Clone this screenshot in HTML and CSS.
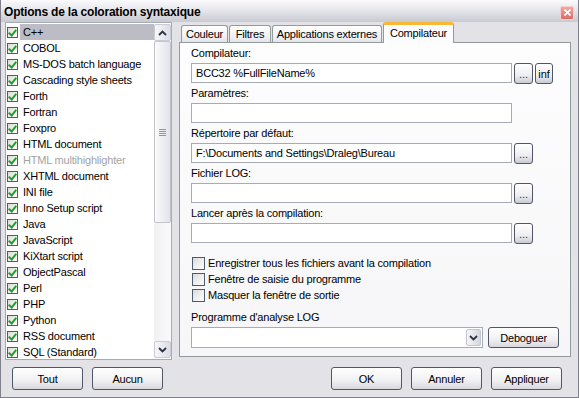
FILE: index.html
```html
<!DOCTYPE html>
<html lang="fr">
<head>
    <meta charset="UTF-8">
    <title>Options de la coloration syntaxique</title>
    <link rel="stylesheet" href="styles.css">
</head>
<body>
    <div class="window">
        <div class="titlebar">
            <span class="title">Options de la coloration syntaxique</span>
            <span class="close-btn">
                <svg width="7" height="7" viewBox="0 0 7 7"><path d="M0.5 0.5L6.5 6.5M6.5 0.5L0.5 6.5" stroke="#fff" stroke-width="1.6"/></svg>
            </span>
        </div>

        <div class="content">
            <!-- Liste des langages -->
            <div class="left-col">
                <div class="listbox">
                    <ul class="lang-list">
                        <li class="selected"><span class="check"></span><span class="lbl">C++</span></li>
                        <li><span class="check"></span><span class="lbl">COBOL</span></li>
                        <li><span class="check"></span><span class="lbl">MS-DOS batch language</span></li>
                        <li><span class="check"></span><span class="lbl">Cascading style sheets</span></li>
                        <li><span class="check"></span><span class="lbl">Forth</span></li>
                        <li><span class="check"></span><span class="lbl">Fortran</span></li>
                        <li><span class="check"></span><span class="lbl">Foxpro</span></li>
                        <li><span class="check"></span><span class="lbl">HTML document</span></li>
                        <li class="disabled"><span class="check"></span><span class="lbl">HTML multihighlighter</span></li>
                        <li><span class="check"></span><span class="lbl">XHTML document</span></li>
                        <li><span class="check"></span><span class="lbl">INI file</span></li>
                        <li><span class="check"></span><span class="lbl">Inno Setup script</span></li>
                        <li><span class="check"></span><span class="lbl">Java</span></li>
                        <li><span class="check"></span><span class="lbl">JavaScript</span></li>
                        <li><span class="check"></span><span class="lbl">KiXtart script</span></li>
                        <li><span class="check"></span><span class="lbl">ObjectPascal</span></li>
                        <li><span class="check"></span><span class="lbl">Perl</span></li>
                        <li><span class="check"></span><span class="lbl">PHP</span></li>
                        <li><span class="check"></span><span class="lbl">Python</span></li>
                        <li><span class="check"></span><span class="lbl">RSS document</span></li>
                        <li><span class="check"></span><span class="lbl">SQL (Standard)</span></li>
                    </ul>
                    <div class="vscroll">
                        <div class="sb-btn">
                            <svg width="9" height="6" viewBox="0 0 9 6"><path d="M1 5L4.5 1.5L8 5" fill="none" stroke="#2b3242" stroke-width="1.8"/></svg>
                        </div>
                        <div class="sb-track">
                            <div class="sb-thumb"><span class="grip"></span></div>
                        </div>
                        <div class="sb-btn">
                            <svg width="9" height="6" viewBox="0 0 9 6"><path d="M1 1L4.5 4.5L8 1" fill="none" stroke="#2b3242" stroke-width="1.8"/></svg>
                        </div>
                    </div>
                </div>
                <div class="btn-row">
                    <button class="btn">Tout</button>
                    <button class="btn">Aucun</button>
                </div>
            </div>

            <!-- Onglets -->
            <div class="right-col">
                <div class="tabs">
                    <div class="tab tab-couleur">Couleur</div>
                    <div class="tab tab-filtres">Filtres</div>
                    <div class="tab tab-apps">Applications externes</div>
                    <div class="tab tab-compil active">Compilateur</div>
                </div>
                <div class="tab-panel">
                    <div class="field-label">Compilateur:</div>
                    <div class="field-row">
                        <div class="input">BCC32 %FullFileName%</div>
                        <button class="small-btn">...</button>
                        <button class="small-btn inf-btn">inf</button>
                    </div>
                    <div class="field-label">Paramètres:</div>
                    <div class="field-row">
                        <div class="input"></div>
                    </div>
                    <div class="field-label">Répertoire par défaut:</div>
                    <div class="field-row">
                        <div class="input">F:\Documents and Settings\Draleg\Bureau</div>
                        <button class="small-btn">...</button>
                    </div>
                    <div class="field-label">Fichier LOG:</div>
                    <div class="field-row">
                        <div class="input"></div>
                        <button class="small-btn">...</button>
                    </div>
                    <div class="field-label">Lancer après la compilation:</div>
                    <div class="field-row">
                        <div class="input"></div>
                        <button class="small-btn">...</button>
                    </div>

                    <div class="options">
                        <label class="opt"><span class="box"></span>Enregistrer tous les fichiers avant la compilation</label>
                        <label class="opt"><span class="box"></span>Fenêtre de saisie du programme</label>
                        <label class="opt"><span class="box"></span>Masquer la fenêtre de sortie</label>
                    </div>

                    <div class="field-label log-label">Programme d'analyse LOG</div>
                    <div class="combo-row">
                        <div class="combo">
                            <span class="combo-arrow">
                                <svg width="9" height="6" viewBox="0 0 9 6"><path d="M1 1L4.5 4.5L8 1" fill="none" stroke="#2b3242" stroke-width="1.8"/></svg>
                            </span>
                        </div>
                        <button class="btn debug-btn">Deboguer</button>
                    </div>
                </div>
                <div class="btn-row right">
                    <button class="btn">OK</button>
                    <button class="btn">Annuler</button>
                    <button class="btn">Appliquer</button>
                </div>
            </div>
        </div>
    </div>
</body>
</html>
```

FILE: styles.css
```css
body {
    margin: 0;
    font-family: "Liberation Sans", Arial, sans-serif;
    font-size: 11px;
    letter-spacing: -0.2px;
    color: #000;
    background-color: #e3e2e6;
}
.window {
    width: 579px;
    height: 398px;
    box-sizing: border-box;
    border: 1px solid #80808c;
    border-top: none;
    background-color: #e3e2e6;
    display: flex;
    flex-direction: column;
}
.titlebar {
    height: 22px;
    flex-shrink: 0;
    display: flex;
    align-items: center;
    justify-content: space-between;
    padding: 0 4px 0 3px;
    background: linear-gradient(#fbfbfd, #e6e6ec 45%, #c9c9d2);
}
.title {
    font-weight: bold;
    font-size: 12px;
    padding-top: 2px;
}
.close-btn {
    width: 12px;
    height: 12px;
    border: 1px solid #f4d0d0;
    border-radius: 2px;
    background: linear-gradient(#f0a8a0, #d86c64);
    display: flex;
    align-items: center;
    justify-content: center;
    margin-top: 3px;
}
.content {
    flex: 1;
    display: flex;
    gap: 7px;
    padding: 0 7px 7px 4px;
}
.left-col {
    width: 167px;
    display: flex;
    flex-direction: column;
}
.right-col {
    width: 392px;
    display: flex;
    flex-direction: column;
}

/* liste */
.listbox {
    height: 338px;
    box-sizing: border-box;
    border: 1px solid #a5acb5;
    background-color: #fff;
    padding: 1px 0;
    display: flex;
}
.lang-list {
    list-style: none;
    margin: 0;
    padding: 0;
    flex: 1;
    overflow: hidden;
}
.lang-list li {
    height: 16px;
    display: flex;
    align-items: center;
    padding-left: 1px;
    white-space: nowrap;
}
.check {
    width: 11px;
    height: 11px;
    box-sizing: border-box;
    border: 1px solid #4b5b78;
    background: linear-gradient(135deg, #dcdcd6, #fff);
    margin-right: 2px;
    position: relative;
    flex-shrink: 0;
}
.check::after {
    content: "";
    position: absolute;
    left: 2px;
    top: 0px;
    width: 3px;
    height: 6px;
    border-right: 2px solid #21a121;
    border-bottom: 2px solid #21a121;
    transform: rotate(40deg);
}
.lbl {
    flex: 1;
    height: 16px;
    line-height: 16px;
    padding-left: 3px;
}
.selected .lbl {
    background-color: #bcbcc4;
}
.disabled .lbl {
    color: #a3a3a3;
}

/* barre de défilement */
.vscroll {
    width: 17px;
    display: flex;
    flex-direction: column;
    background: linear-gradient(90deg, #f1f1f4, #fafafb);
}
.sb-btn {
    height: 17px;
    box-sizing: border-box;
    border: 1px solid #c9cbd5;
    border-radius: 2px;
    background: linear-gradient(90deg, #f7f7fa, #dcdde5);
    display: flex;
    align-items: center;
    justify-content: center;
}
.sb-track {
    flex: 1;
}
.sb-thumb {
    height: 182px;
    box-sizing: border-box;
    border: 1px solid #c1c3cd;
    border-radius: 2px;
    background: linear-gradient(90deg, #fbfbfc, #e2e3ea);
    display: flex;
    align-items: center;
    justify-content: center;
}
.grip {
    width: 7px;
    height: 7px;
    background: repeating-linear-gradient(#8f94a3 0 1px, transparent 1px 2px);
}

/* boutons */
.btn-row {
    margin-top: auto;
    display: flex;
    gap: 9px;
    padding-left: 7px;
}
.btn-row.right {
    justify-content: flex-end;
    padding-left: 0;
    padding-right: 9px;
}
.btn {
    width: 71px;
    height: 23px;
    box-sizing: border-box;
    border: 1px solid #4f5767;
    border-radius: 3px;
    background: linear-gradient(#ffffff, #f0f0f2 60%, #d8d8de);
    font-family: inherit;
    font-size: 11px;
    letter-spacing: -0.2px;
    color: #000;
    padding: 0;
}

/* onglets */
.tabs {
    height: 20px;
    display: flex;
    align-items: flex-end;
    padding-left: 2px;
    gap: 1px;
    position: relative;
    z-index: 1;
}
.tab {
    height: 17px;
    box-sizing: border-box;
    border: 1px solid #919b9c;
    border-bottom: none;
    border-radius: 3px 3px 0 0;
    background: linear-gradient(#ffffff, #f0f0f3 70%, #e4e4e8);
    text-align: center;
    line-height: 17px;
}
.tab-couleur { width: 47px; }
.tab-filtres { width: 42px; }
.tab-apps { width: 110px; }
.tab-compil { width: 71px; }
.tab.active {
    height: 21px;
    margin-bottom: -1px;
    background: #fcfcfe;
    border-top: 3px solid #f7b833;
    line-height: 16px;
}
.tab-panel {
    height: 315px;
    box-sizing: border-box;
    border: 1px solid #919b9c;
    background: linear-gradient(#fdfdfe, #f6f6f8);
    padding: 0 11px;
}
.field-label {
    height: 20px;
    line-height: 20px;
}
.field-row {
    height: 20px;
    display: flex;
    gap: 2px;
}
.input {
    width: 321px;
    height: 20px;
    box-sizing: border-box;
    border: 1px solid #a5acb5;
    background-color: #fff;
    padding-left: 4px;
    line-height: 18px;
    white-space: nowrap;
}
.small-btn {
    width: 19px;
    height: 21px;
    box-sizing: border-box;
    border: 1px solid #4f5767;
    border-radius: 3px;
    background: linear-gradient(#ffffff, #eeeef2 60%, #c9cbd6);
    font-family: inherit;
    font-size: 11px;
    padding: 0;
    line-height: 14px;
    color: #333;
}
.inf-btn {
    width: 18px;
    line-height: 18px;
    color: #000;
}

/* cases à cocher */
.options {
    margin-top: 12px;
}
.opt {
    height: 16px;
    display: flex;
    align-items: center;
}
.box {
    width: 13px;
    height: 13px;
    box-sizing: border-box;
    border: 1px solid #4b5b78;
    background: linear-gradient(135deg, #dcdcd6, #fff);
    margin-right: 3px;
    margin-left: 1px;
}
.log-label {
    margin-top: 4px;
}
.combo-row {
    display: flex;
    gap: 5px;
}
.combo {
    width: 293px;
    height: 21px;
    box-sizing: border-box;
    border: 1px solid #a5acb5;
    background-color: #fff;
    display: flex;
    justify-content: flex-end;
    padding: 1px;
}
.combo-arrow {
    width: 15px;
    box-sizing: border-box;
    border: 1px solid #c3c6d1;
    border-radius: 2px;
    background: linear-gradient(90deg, #f4f4f8, #d5d7e0);
    display: flex;
    align-items: center;
    justify-content: center;
}
.debug-btn {
    height: 21px;
}
```
